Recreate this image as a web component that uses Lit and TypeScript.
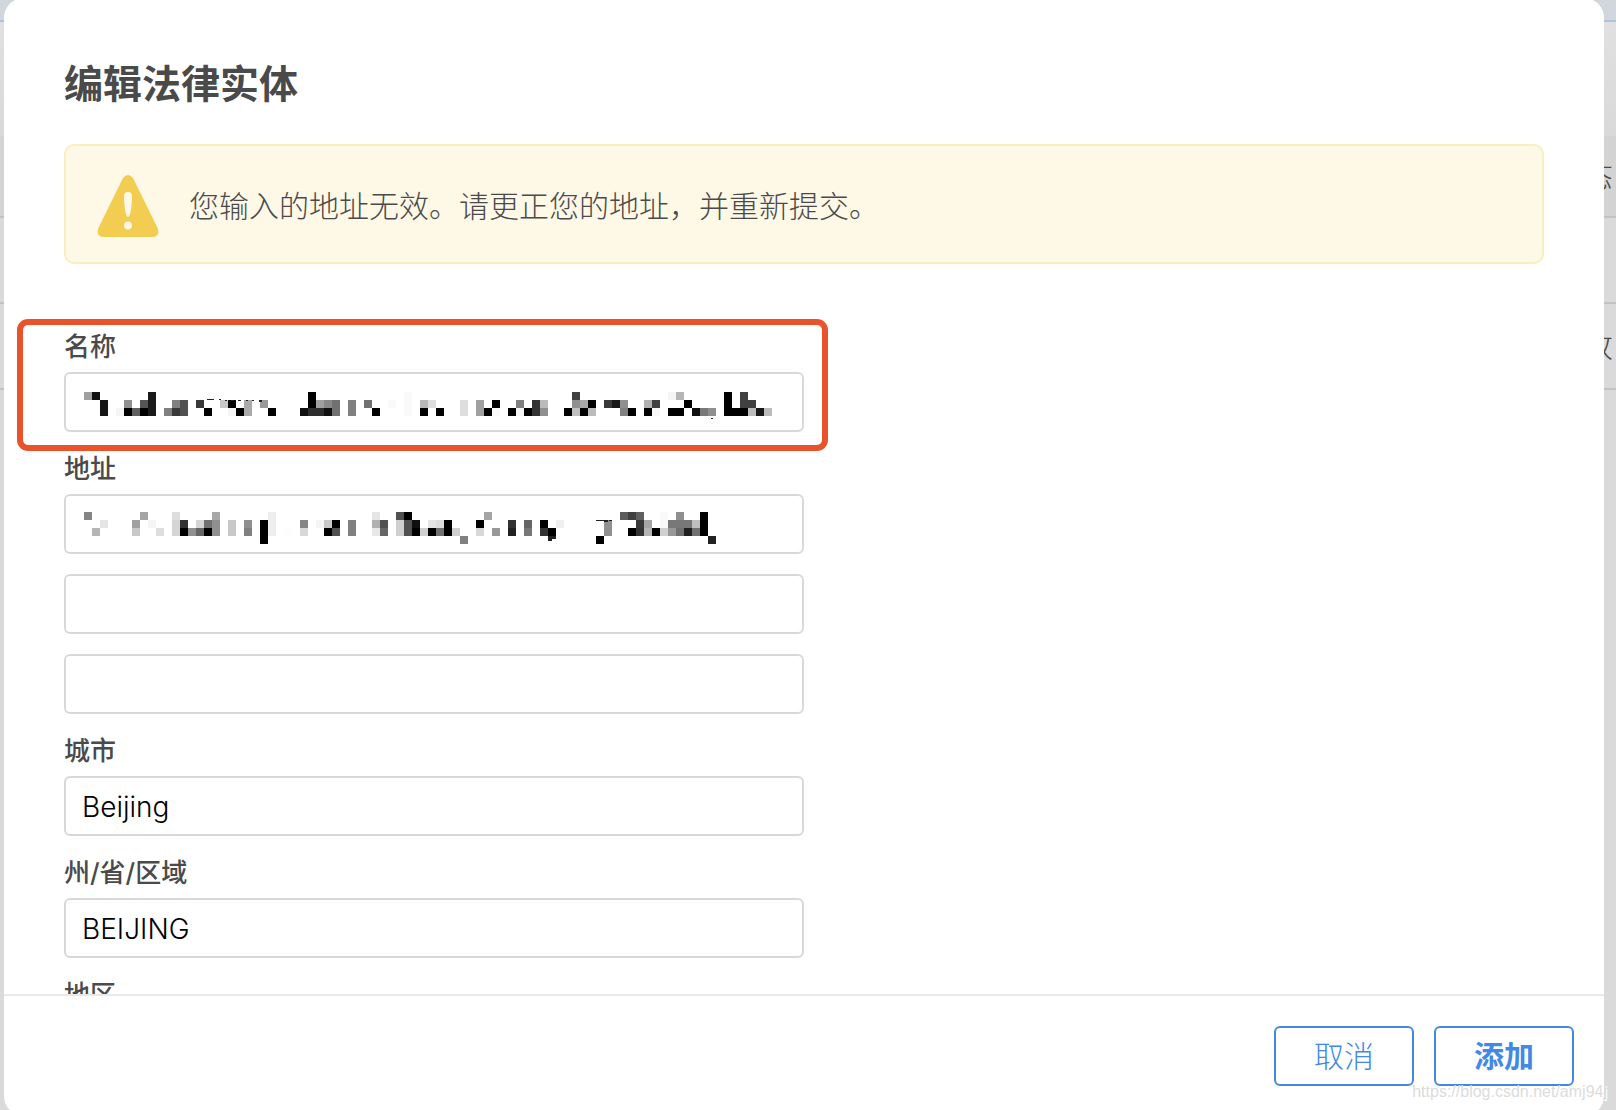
import { LitElement, html, svg, css, nothing } from "lit";
import { customElement, property } from "lit/decorators.js";

const CELL = 8;

/** Each row lists "column:gray" pairs; the gray is a two-digit hex level. */
const NAME_MOSAIC = [
  "0:a0 1:10 8:1a 28:00 40:fa 61:40 73:f5 74:b5 80:00 82:40",
  "2:15 5:90 7:55 8:1a 11:80 12:50 14:38 17:c8 18:00 20:aa 22:99 28:00 29:a0 30:88 31:70 33:80 35:70 38:fa 40:fa 42:b8 43:dd 47:dd 49:a0 51:00 54:80 56:33 57:bb 61:90 62:a8 63:00 65:38 66:18 67:90 70:b0 71:40 75:00 80:00 82:40 83:40",
  "2:15 4:f5 5:00 6:60 7:00 8:1a 10:80 11:38 12:50 15:00 18:f5 19:00 20:aa 23:00 27:10 28:2d 29:2d 30:10 31:70 33:80 36:00 40:fa 42:00 44:00 47:dd 49:a0 50:00 51:fa 53:00 54:f5 55:00 56:33 57:90 60:00 61:c0 62:00 63:bb 67:80 68:00 70:00 71:f8 73:00 74:00 76:10 77:78 78:90 80:00 81:00 82:00 83:bb 84:18 85:bb",
];

const ADDRESS_MOSAIC = [
  "0:85 7:a5 11:dd 16:a8 23:ee 36:e5 39:50 40:00 50:a5 67:5c 68:40 69:60 72:fa 74:90 77:00",
  "2:e5 6:a0 8:f5 11:d5 12:33 14:d5 15:70 16:90 18:c8 20:90 22:00 23:ee 27:85 29:f5 30:c8 31:00 33:80 36:b0 37:50 39:d0 40:50 41:10 43:e5 44:dd 45:00 49:00 53:33 55:66 57:00 59:f0 65:90 69:38 70:a5 72:f8 73:78 74:78 75:78 76:c0 77:00",
  "1:b5 6:c8 9:dd 11:d5 12:00 13:90 14:66 15:00 16:90 18:c8 20:80 22:00 23:ee 25:fd 27:d8 30:00 31:50 33:80 36:e8 37:66 39:d0 40:50 41:00 42:d0 43:00 44:70 45:00 46:d0 49:d8 51:98 53:22 55:77 57:33 58:00 65:90 68:00 69:33 70:b5 71:00 72:d0 73:98 74:70 75:20 76:70 77:00",
  "22:00 47:80 64:00 78:22",
];

/** Loose strokes left between the cells, as SVG path data. */
const NAME_SPECKS =
  "M123 7h7v1h-7zM135 7h2v1h-2zM141 8h2v1h-2zM147 8h3v1h-3zM154 8h3v1h-3zM162 8h2v1h-2zM168 8h2v1h-2zM175 8h3v2h-3zM627 26h2v1h-2z";
const ADDRESS_SPECKS =
  "M512 8h12v1h-12zM520 9h4v1h-4zM525 8h3v1h-3zM464 24h8v3h-3l-2 1h-2v1h-1zM464 28h4v1h-4z";

@customElement("redacted-value")
export class RedactedValue extends LitElement {
  @property({ attribute: false }) rows: string[] = [];
  @property() specks = "";

  static styles = css`
    :host { display: block; pointer-events: none; }
    .cells { display: block; }
  `;

  render() {
    return html`<svg class="cells" width="704" height="32" viewBox="0 0 704 32"
      shape-rendering="crispEdges" aria-hidden="true">
      ${this.rows.map((row, y) => row.split(" ").map((entry) => {
        const [x, gray] = entry.split(":");
        return svg`<rect x=${Number(x) * CELL} y=${y * CELL} width=${CELL} height=${CELL}
          fill=${"#" + gray.repeat(3)}></rect>`;
      }))}
      <path d=${this.specks} fill="#222"></path>
    </svg>`;
  }
}

interface Field {
  id: string;
  label?: string;
  aria?: string;
  value?: string;
  mosaic?: string[];
  specks?: string;
  marked?: boolean;
}

const FIELDS: Field[] = [
  { id: "name", label: "名称", mosaic: NAME_MOSAIC, specks: NAME_SPECKS, marked: true },
  { id: "address1", label: "地址", mosaic: ADDRESS_MOSAIC, specks: ADDRESS_SPECKS },
  { id: "address2", aria: "地址 2" },
  { id: "address3", aria: "地址 3" },
  { id: "city", label: "城市", value: "Beijing" },
  { id: "state", label: "州/省/区域", value: "BEIJING" },
  { id: "region", label: "地区" },
];

@customElement("app-root")
export class AppRoot extends LitElement {
  static styles = css`
    :host {
      display: grid;
      height: 100vh;
      overflow: hidden;
      position: relative;
      font-family: Inter, "Noto Sans CJK SC", sans-serif;
      color: #4a4a4a;
    }
    * { box-sizing: border-box; }
    .backdrop, .stage { grid-area: 1 / 1; min-width: 0; min-height: 0; }
    .backdrop { background: #dadada; font-size: 30px; font-weight: 300; }
    .bar { height: 22px; background: #d1d7dc; border-bottom: 2px solid #afc4dc; }
    .space { height: 114px; background: linear-gradient(#e0e0e0, #d9d9d9); }
    .line {
      display: flex;
      align-items: center;
      justify-content: flex-end;
      height: 86px;
      padding: 0 3px 4px 0;
      border-bottom: 2px solid #c2c2c2;
    }
    .line.head { height: 82px; background: #d3d3d3; }
    .stage { display: flex; padding: 0 12px 0 4px; }
    .dialog {
      flex: 1;
      display: flex;
      flex-direction: column;
      min-width: 0;
      margin: -2px 0 -6px;
      background: #fff;
      border-radius: 20px;
      overflow: hidden;
    }
    .body { flex: 1; min-height: 0; overflow: hidden; padding: 56px 60px 0; }
    .title { margin: 0 0 30px; font-size: 39px; line-height: 60px; font-weight: 700; }
    .alert {
      display: flex;
      align-items: center;
      gap: 30px;
      height: 120px;
      margin-bottom: 66px;
      padding: 4px 31px 0;
      background: #fef8e6;
      border: 2px solid #f8efbf;
      border-radius: 10px;
    }
    .alert-icon { flex: none; display: block; }
    .alert-text { margin: 0; font-size: 30px; line-height: 40px; font-weight: 300; }
    .form { display: flex; flex-direction: column; gap: 20px; width: 50%; }
    .field { position: relative; }
    .label {
      display: block;
      margin-bottom: 8px;
      font-size: 26px;
      line-height: 34px;
      font-weight: 500;
    }
    .control { display: grid; }
    .input, .redacted { grid-area: 1 / 1; }
    .input {
      width: 100%;
      height: 60px;
      margin: 0;
      padding: 2px 16px 0;
      border: 2px solid #d8d8d8;
      border-radius: 6px;
      background: #fff;
      color: #000;
      font: 300 28px Inter, "Noto Sans CJK SC", sans-serif;
      outline: none;
    }
    .redacted { padding: 20px 0 0 20px; }
    .redacted.upper { padding-top: 18px; }
    .marker {
      position: absolute;
      inset: -11px -24px -19px -47px;
      border: 6px solid #e8532b;
      border-radius: 11px;
      pointer-events: none;
    }
    .footer {
      flex: none;
      display: flex;
      justify-content: flex-end;
      gap: 20px;
      padding: 30px;
      border-top: 2px solid #e8e8e8;
    }
    .button {
      width: 140px;
      height: 60px;
      padding: 0 0 4px;
      border: 2px solid #4289e6;
      border-radius: 6px;
      background: #fff;
      color: #4289e6;
      font: 300 30px "Noto Sans CJK SC", sans-serif;
    }
    .button.primary { font-weight: 700; }
    .watermark {
      position: absolute;
      right: 9px;
      bottom: 8px;
      font: 16px/20px "Liberation Sans", sans-serif;
      color: #dcdcdc;
      text-shadow: 1px 1px 0 #fff;
      pointer-events: none;
    }
  `;

  private renderField(f: Field) {
    return html`<div class="field">
      ${f.label ? html`<label class="label" for=${f.id}>${f.label}</label>` : nothing}
      <div class="control">
        <input class="input" id=${f.id} type="text" .value=${f.value ?? ""}
          aria-label=${f.aria ?? nothing} />
        ${f.mosaic
          ? html`<redacted-value class="redacted ${f.marked ? "" : "upper"}"
              .rows=${f.mosaic} .specks=${f.specks ?? ""}></redacted-value>`
          : nothing}
      </div>
      ${f.marked ? html`<div class="marker"></div>` : nothing}
    </div>`;
  }

  render() {
    return html`
      <div class="backdrop" aria-hidden="true">
        <div class="bar"></div>
        <div class="space"></div>
        <div class="line head">态</div>
        <div class="line"></div>
        <div class="line">改</div>
      </div>
      <div class="stage">
        <section class="dialog" role="dialog" aria-labelledby="title">
          <div class="body">
            <h1 class="title" id="title">编辑法律实体</h1>
            <div class="alert" role="alert">
              <svg class="alert-icon" width="62" height="64" viewBox="0 0 62 64" aria-hidden="true">
                <path fill="#f3cd52"
                  d="M26 4Q31-2 36 4L60.600 54Q63.600 62.600 55 63H7Q-1.600 62.600 1.400 54Z" />
                <path fill="#fef8e6"
                  d="M27 22Q27 18 31 18Q35 18 35 22C35 30 33.600 43 31 43C28.400 43 27 30 27 22Z" />
                <circle cx="31" cy="51.500" r="3.900" fill="#fef8e6" />
              </svg>
              <p class="alert-text">您输入的地址无效。请更正您的地址，并重新提交。</p>
            </div>
            <form class="form">${FIELDS.map((f) => this.renderField(f))}</form>
          </div>
          <footer class="footer">
            <button class="button" type="button">取消</button>
            <button class="button primary" type="button">添加</button>
          </footer>
        </section>
      </div>
      <div class="watermark">https://blog.csdn.net/amj94j</div>
    `;
  }
}
